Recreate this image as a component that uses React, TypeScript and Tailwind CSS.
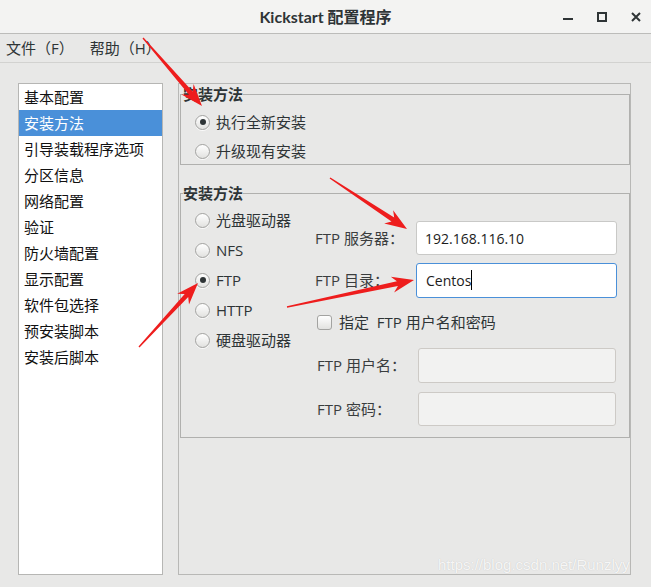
import React from "react";

function Radio({ checked }: { checked?: boolean }) {
  return (
    <span className="flex w-[15px] h-[15px] shrink-0 items-center justify-center rounded-full border border-[#a3a3a1] bg-linear-to-b from-white to-[#e2e2e0] shadow-[0_1px_0_rgba(255,255,255,0.8)]">
      {checked && <span className="block w-[6px] h-[6px] rounded-full bg-[#2e3436]" />}
    </span>
  );
}

function RadioRow({ label, checked, cls }: { label: string; checked?: boolean; cls: string }) {
  return (
    <div className={cls}>
      <Radio checked={checked} />
      <span className="ml-[6px] text-[15px] leading-[20px] text-[#2e3436]">{label}</span>
    </div>
  );
}

function arrowPoints(sx: number, sy: number, tx: number, ty: number) {
  const dx = tx - sx;
  const dy = ty - sy;
  const len = Math.hypot(dx, dy);
  const ux = dx / len;
  const uy = dy / len;
  const nx = -uy;
  const ny = ux;
  const L = 22;
  const H = 8;
  const w0 = 0.7;
  const w1 = 2.4;
  const bx = tx - ux * L;
  const by = ty - uy * L;
  const cx = bx + ux * 5;
  const cy = by + uy * 5;
  const p = [
    [sx + nx * w0, sy + ny * w0],
    [cx + nx * w1, cy + ny * w1],
    [bx + nx * H, by + ny * H],
    [tx, ty],
    [bx - nx * H, by - ny * H],
    [cx - nx * w1, cy - ny * w1],
    [sx - nx * w0, sy - ny * w0],
  ];
  return p.map((q) => `${q[0].toFixed(1)},${q[1].toFixed(1)}`).join(" ");
}

const items = [
  "基本配置",
  "安装方法",
  "引导装载程序选项",
  "分区信息",
  "网络配置",
  "验证",
  "防火墙配置",
  "显示配置",
  "软件包选择",
  "预安装脚本",
  "安装后脚本",
];

export default function App() {
  return (
    <div className="relative w-[651px] h-[587px] overflow-hidden bg-[#e8e8e7] font-['Open_Sans','Noto_Sans_CJK_SC',sans-serif] text-[#2e3436]">
      {/* Title bar */}
      <div className="grid grid-cols-[1fr_auto_1fr] items-center h-[34px] bg-[#f3f3f2] border-b border-[#bcbcba]">
        <div />
        <div className="font-['Lato','Noto_Sans_CJK_SC',sans-serif] font-bold text-[16px] leading-[20px] text-[#2e3436]">
          Kickstart 配置程序
        </div>
        <div className="flex justify-end -mr-[2px]">
          <div className="flex w-[34px] h-[34px] items-center justify-center">
            <svg width="12" height="12" viewBox="0 0 12 12">
              <rect x="1" y="7" width="10" height="2" fill="#2e3436" />
            </svg>
          </div>
          <div className="flex w-[34px] h-[34px] items-center justify-center">
            <svg width="12" height="12" viewBox="0 0 12 12">
              <rect x="2" y="2" width="8" height="8" fill="none" stroke="#2e3436" strokeWidth="2" />
            </svg>
          </div>
          <div className="flex w-[34px] h-[34px] items-center justify-center">
            <svg width="12" height="12" viewBox="0 0 12 12">
              <path d="M2 2 L10 10 M10 2 L2 10" stroke="#2e3436" strokeWidth="2" />
            </svg>
          </div>
        </div>
      </div>

      {/* Menu bar */}
      <div className="flex items-center h-[29px] border-b border-[#d2d2d0] pl-[6px] text-[15px] text-[#2e3436]">
        <span>文件（F）</span>
        <span className="ml-[16px]">帮助（H）</span>
      </div>

      {/* Main */}
      <div className="flex pt-[20px] pl-[18px] gap-[15px]">
        <div className="w-[145px] h-[492px] bg-white border border-[#b6b6b4]">
          {items.map((it, i) => (
            <div
              key={it}
              className={
                i === 1
                  ? "h-[26px] leading-[26px] pl-[5px] text-[15px] bg-[#4a90d9] text-white"
                  : "h-[26px] leading-[26px] pl-[5px] text-[15px] text-[#111111]"
              }
            >
              {it}
            </div>
          ))}
        </div>

        <div className="w-[453px] h-[492px] border border-[#b8b8b6] pl-[1px] flex flex-col">
          <fieldset className="h-[81px] border border-[#b0b0ae]">
            <legend className="ml-[2px] text-[15px] leading-[20px] font-bold text-[#2e3436]">安装方法</legend>
            <div className="flex flex-col pt-[3px] pl-[14px]">
              <RadioRow cls="flex items-center h-[30px]" label="执行全新安装" checked />
              <RadioRow cls="flex items-center h-[30px] -mt-[1px]" label="升级现有安装" />
            </div>
          </fieldset>

          <fieldset className="mt-[18px] h-[255px] border border-[#b0b0ae]">
            <legend className="ml-[2px] text-[15px] leading-[20px] font-bold text-[#2e3436]">安装方法</legend>
            <div className="flex">
              <div className="flex flex-col w-[134px] pl-[14px] pt-[2px]">
                <RadioRow cls="flex items-center h-[30px]" label="光盘驱动器" />
                <RadioRow cls="flex items-center h-[30px]" label="NFS" />
                <RadioRow cls="flex items-center h-[30px]" label="FTP" checked />
                <RadioRow cls="flex items-center h-[30px]" label="HTTP" />
                <RadioRow cls="flex items-center h-[30px]" label="硬盘驱动器" />
              </div>
              <div className="flex flex-col pt-[18px] text-[15px] text-[#3a3d3e]">
                <div className="flex items-center h-[34px]">
                  <span className="w-[101px]">FTP 服务器：</span>
                  <div className="flex items-center w-[201px] h-[34px] rounded-[3px] border border-[#c9c9c7] bg-white pl-[8px] text-[14px] text-[#1c1c1c]">
                    192.168.116.10
                  </div>
                </div>
                <div className="flex items-center h-[34px] mt-[8px]">
                  <span className="w-[101px]">FTP 目录：</span>
                  <div className="flex items-center w-[201px] h-[35px] rounded-[3px] border border-[#4a90d9] bg-white pl-[9px] text-[14px] text-[#1c1c1c]">
                    Centos
                    <span className="inline-block w-[1px] h-[20px] bg-black" />
                  </div>
                </div>
                <div className="flex items-center h-[51px] pl-[2px]">
                  <span className="w-[15px] h-[15px] rounded-[3px] border border-[#a3a3a1] bg-linear-to-b from-white to-[#e2e2e0]" />
                  <span className="ml-[7px] whitespace-pre text-[#2e3436]">指定  FTP 用户名和密码</span>
                </div>
                <div className="flex items-center h-[34px]">
                  <span className="w-[103px] pl-[2px]">FTP 用户名：</span>
                  <div className="w-[198px] h-[35px] rounded-[3px] border border-[#cdcac6] bg-[#f2f2f1]" />
                </div>
                <div className="flex items-center h-[34px] mt-[10px]">
                  <span className="w-[103px] pl-[2px]">FTP 密码：</span>
                  <div className="w-[198px] h-[34px] rounded-[3px] border border-[#cdcac6] bg-[#f2f2f1]" />
                </div>
              </div>
            </div>
          </fieldset>
        </div>
      </div>

      {/* Watermark */}
      <div className="absolute left-[438px] top-[556px] font-['Liberation_Sans',sans-serif] text-[15px] leading-[18px] text-white/85 [text-shadow:0_0_1px_rgba(0,0,0,0.2)]">
        https://blog.csdn.net/Runzlyy
      </div>

      {/* Annotation arrows */}
      <svg className="absolute inset-0 pointer-events-none" width="651" height="587" viewBox="0 0 651 587">
        <polygon points={arrowPoints(143, 38, 202, 106)} fill="#ee1d1d" />
        <polygon points={arrowPoints(330, 178, 407, 229)} fill="#ee1d1d" />
        <polygon points={arrowPoints(287, 307, 414, 280)} fill="#ee1d1d" />
        <polygon points={arrowPoints(139, 347, 198, 283)} fill="#ee1d1d" />
      </svg>
    </div>
  );
}
